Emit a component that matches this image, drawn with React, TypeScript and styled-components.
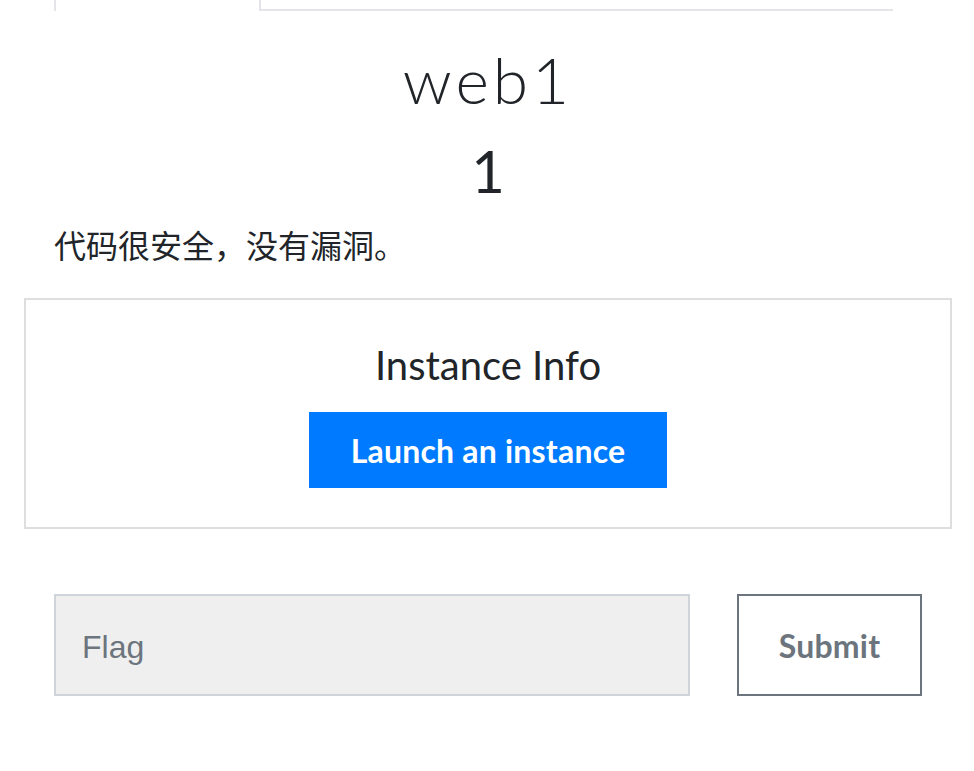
import React from 'react'
import styled, { createGlobalStyle } from 'styled-components'

const GlobalStyle = createGlobalStyle`
    html, body {
        margin: 0;
        padding: 0;
        background: #ffffff;
    }
    body {
        font-family: Lato, "Noto Sans CJK SC", sans-serif;
        color: #212529;
    }
`

const SModalBody = styled.div`
    width: 974px;
    padding: 0 22px 0 24px;
    box-sizing: border-box;
`

const SNav = styled.div`
    display: flex;
    height: 11px;
    margin: 0 59px 0 30px;
`

const SActiveTab = styled.div`
    width: 207px;
    box-sizing: border-box;
    border-left: 2px solid #e3e5e9;
    border-right: 2px solid #e3e5e9;
`

const SNavRest = styled.div`
    flex: 1;
    border-bottom: 2px solid #e3e5e9;
    border-bottom-left-radius: 3px;
    margin-left: -2px;
`

const STitle = styled.h2`
    margin: 30px 0 0;
    text-align: center;
    font-family: Lato, sans-serif;
    font-weight: 300;
    font-size: 64px;
    line-height: 77px;
    letter-spacing: 4px;
`

const SValue = styled.h3`
    margin: 18px 0 0;
    text-align: center;
    font-family: Lato, sans-serif;
    font-weight: 400;
    font-size: 58px;
    line-height: 70px;
`

const SDescription = styled.p`
    margin: 14px 0 0;
    padding-left: 30px;
    font-family: "Noto Sans CJK SC", sans-serif;
    font-size: 32px;
    line-height: 48px;
    color: #212529;
`

const SInstanceBox = styled.div`
    margin-top: 30px;
    height: 231px;
    box-sizing: border-box;
    border: 2px solid #dedede;
    display: flex;
    flex-direction: column;
    align-items: center;
    padding-top: 41px;
`

const SInstanceTitle = styled.h5`
    margin: 0;
    font-family: Lato, sans-serif;
    font-weight: 400;
    font-size: 40px;
    line-height: 48px;
`

const SLaunchButton = styled.button`
    margin-top: 23px;
    width: 358px;
    height: 76px;
    border: none;
    background: #007bff;
    color: #ffffff;
    font-family: Lato, sans-serif;
    font-weight: 700;
    font-size: 32px;
    letter-spacing: 0.2px;
    cursor: pointer;
`

const SFormRow = styled.div`
    display: flex;
    gap: 47px;
    margin: 65px 30px 0 30px;
`

const SFlagInput = styled.input`
    flex: 0 0 636px;
    height: 102px;
    box-sizing: border-box;
    border: 2px solid #ced4da;
    background: #efefef;
    padding: 4px 26px 0;
    font-family: "Liberation Sans", Arial, sans-serif;
    font-size: 32px;
    color: #495057;
    outline: none;
    &::placeholder {
        color: #6c757d;
    }
`

const SSubmitButton = styled.button`
    flex: 0 0 185px;
    height: 102px;
    box-sizing: border-box;
    border: 2px solid #6c757d;
    background: #ffffff;
    color: #6c757d;
    font-family: Lato, sans-serif;
    font-weight: 700;
    font-size: 32px;
    letter-spacing: 0.2px;
    cursor: pointer;
`

const App: React.FC = () => {
    return (
        <>
            <GlobalStyle />
            <SModalBody>
                <SNav>
                    <SActiveTab />
                    <SNavRest />
                </SNav>
                <STitle>web1</STitle>
                <SValue>1</SValue>
                <SDescription>代码很安全，没有漏洞。</SDescription>
                <SInstanceBox>
                    <SInstanceTitle>Instance Info</SInstanceTitle>
                    <SLaunchButton>Launch an instance</SLaunchButton>
                </SInstanceBox>
                <SFormRow>
                    <SFlagInput placeholder="Flag" />
                    <SSubmitButton>Submit</SSubmitButton>
                </SFormRow>
            </SModalBody>
        </>
    )
}

export default App
